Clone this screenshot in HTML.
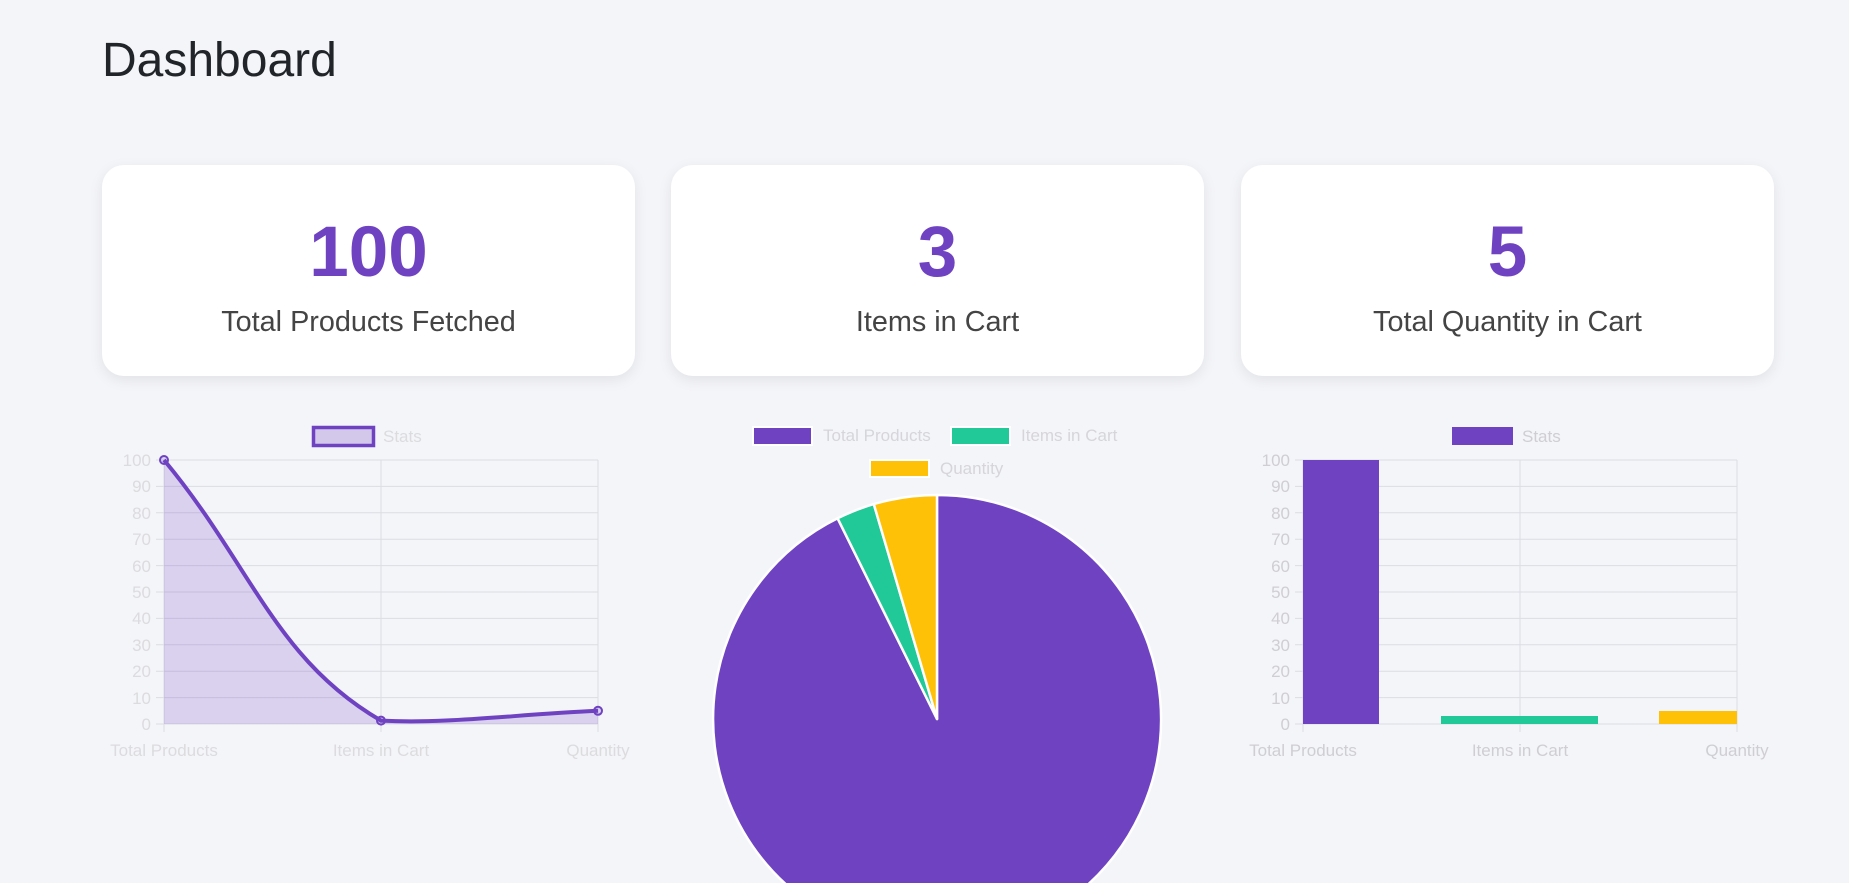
<!DOCTYPE html>
<html><head><meta charset="utf-8">
<style>
html,body{margin:0;padding:0;overflow:hidden;}
body{width:1849px;height:883px;background:#f4f5f9;font-family:"Liberation Sans",Arial,sans-serif;position:relative;overflow:hidden;}
h1{position:absolute;left:102px;top:33px;margin:0;font-weight:400;font-size:48px;line-height:56px;color:#212529;}
.card{position:absolute;top:165px;width:533px;height:211px;background:#fff;border-radius:22px;box-shadow:0 4px 14px rgba(0,0,0,0.08);}
.num{position:absolute;width:533px;top:211px;font-size:71px;font-weight:700;color:#6f42c1;line-height:84px;text-align:center;}
.lbl{position:absolute;width:533px;top:304px;font-size:28.8px;color:#444;line-height:36px;text-align:center;}
svg{position:absolute;left:0;top:0;}
</style></head><body>
<h1>Dashboard</h1>
<div class="card" style="left:102px"></div>
<div class="card" style="left:671px"></div>
<div class="card" style="left:1241px"></div>
<div class="num" style="left:102px">100</div>
<div class="lbl" style="left:102px">Total Products Fetched</div>
<div class="num" style="left:671px">3</div>
<div class="lbl" style="left:671px">Items in Cart</div>
<div class="num" style="left:1241px">5</div>
<div class="lbl" style="left:1241px">Total Quantity in Cart</div>

<svg width="1849" height="883" viewBox="0 0 1849 883" font-family="Liberation Sans, Arial, sans-serif" font-size="17">
<g stroke="#dcdde2" stroke-width="1">
<line x1="156" y1="460" x2="598" y2="460"/><line x1="156" y1="486.4" x2="598" y2="486.4"/><line x1="156" y1="512.8" x2="598" y2="512.8"/><line x1="156" y1="539.2" x2="598" y2="539.2"/><line x1="156" y1="565.6" x2="598" y2="565.6"/><line x1="156" y1="592" x2="598" y2="592"/><line x1="156" y1="618.4" x2="598" y2="618.4"/><line x1="156" y1="644.8" x2="598" y2="644.8"/><line x1="156" y1="671.2" x2="598" y2="671.2"/><line x1="156" y1="697.6" x2="598" y2="697.6"/><line x1="156" y1="724" x2="598" y2="724"/>
<line x1="164" y1="460" x2="164" y2="732"/><line x1="381" y1="460" x2="381" y2="732"/><line x1="598" y1="460" x2="598" y2="732"/>
</g>
<path d="M164 460 C250.8 564.2 275.2 659.5 381 720.6 C448.7 724 511.2 714.7 598 710.8 L598 724 L164 724 Z" fill="rgba(111,66,193,0.2)"/>
<path d="M164 460 C250.8 564.2 275.2 659.5 381 720.6 C448.7 724 511.2 714.7 598 710.8" fill="none" stroke="#6f42c1" stroke-width="4"/>
<g fill="rgba(111,66,193,0.2)" stroke="#6f42c1" stroke-width="2"><circle cx="164" cy="460" r="4"/><circle cx="381" cy="720.6" r="4"/><circle cx="598" cy="710.8" r="4"/></g>
<g fill="#dcdcdf" text-anchor="end">
<text x="151" y="466">100</text><text x="151" y="492">90</text><text x="151" y="519">80</text><text x="151" y="545">70</text><text x="151" y="572">60</text><text x="151" y="598">50</text><text x="151" y="624">40</text><text x="151" y="651">30</text><text x="151" y="677">20</text><text x="151" y="704">10</text><text x="151" y="730">0</text>
</g>
<g fill="#dcdcdf" text-anchor="middle"><text x="164" y="756">Total Products</text><text x="381" y="756">Items in Cart</text><text x="598" y="756">Quantity</text></g>
<rect x="313.5" y="427.5" width="60" height="18" fill="rgba(111,66,193,0.25)" stroke="#6f42c1" stroke-width="3.5"/>
<text x="383" y="442" fill="#dcdcdf">Stats</text>

<rect x="753" y="427" width="59" height="18" fill="#6f42c1" stroke="#fff" stroke-width="2"/>
<text x="823" y="441" fill="#d6d6da">Total Products</text>
<rect x="951" y="427" width="59" height="18" fill="#20c997" stroke="#fff" stroke-width="2"/>
<text x="1021" y="441" fill="#d6d6da">Items in Cart</text>
<rect x="870" y="460" width="59" height="17" fill="#ffc107" stroke="#fff" stroke-width="2"/>
<text x="940" y="474" fill="#d6d6da">Quantity</text>
<g stroke="#fff" stroke-width="2.5" stroke-linejoin="round">
<path d="M937 719 L937 495 A224 224 0 1 1 837.6 518.3 Z" fill="#6f42c1"/>
<path d="M937 719 L837.6 518.3 A224 224 0 0 1 873.8 504.1 Z" fill="#20c997"/>
<path d="M937 719 L873.8 504.1 A224 224 0 0 1 937 495 Z" fill="#ffc107"/>
</g>

<g stroke="#dcdde2" stroke-width="1">
<line x1="1295" y1="460" x2="1737" y2="460"/><line x1="1295" y1="486.4" x2="1737" y2="486.4"/><line x1="1295" y1="512.8" x2="1737" y2="512.8"/><line x1="1295" y1="539.2" x2="1737" y2="539.2"/><line x1="1295" y1="565.6" x2="1737" y2="565.6"/><line x1="1295" y1="592" x2="1737" y2="592"/><line x1="1295" y1="618.4" x2="1737" y2="618.4"/><line x1="1295" y1="644.8" x2="1737" y2="644.8"/><line x1="1295" y1="671.2" x2="1737" y2="671.2"/><line x1="1295" y1="697.6" x2="1737" y2="697.6"/><line x1="1295" y1="724" x2="1737" y2="724"/>
<line x1="1303" y1="460" x2="1303" y2="732"/><line x1="1520" y1="460" x2="1520" y2="732"/><line x1="1737" y1="460" x2="1737" y2="732"/>
</g>
<rect x="1303" y="460" width="76" height="264" fill="#6f42c1"/>
<rect x="1441" y="716" width="157" height="8" fill="#20c997"/>
<rect x="1659" y="711" width="78" height="13" fill="#ffc107"/>
<g fill="#cfcfd3" text-anchor="end">
<text x="1290" y="466">100</text><text x="1290" y="492">90</text><text x="1290" y="519">80</text><text x="1290" y="545">70</text><text x="1290" y="572">60</text><text x="1290" y="598">50</text><text x="1290" y="624">40</text><text x="1290" y="651">30</text><text x="1290" y="677">20</text><text x="1290" y="704">10</text><text x="1290" y="730">0</text>
</g>
<g fill="#cfcfd3" text-anchor="middle"><text x="1303" y="756">Total Products</text><text x="1520" y="756">Items in Cart</text><text x="1737" y="756">Quantity</text></g>
<rect x="1452" y="427" width="61" height="18" fill="#6f42c1"/>
<text x="1522" y="442" fill="#cfcfd3">Stats</text>
</svg>
</body></html>
